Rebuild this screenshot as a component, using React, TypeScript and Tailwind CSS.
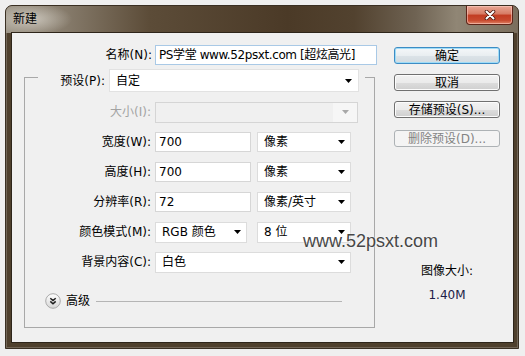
import React from "react";

const Arrow = ({ color = "#000" }: { color?: string }) => (
  <svg width="7" height="4" viewBox="0 0 7 4" className="shrink-0">
    <path d="M0 0H7L3.5 4Z" fill={color} />
  </svg>
);

function Select({ className, text }: { className: string; text: string }) {
  return (
    <div
      className={`flex items-center justify-between bg-white border border-[#dcdcdc] pl-[6px] pr-[5px] ${className}`}
    >
      <span>{text}</span>
      <Arrow />
    </div>
  );
}

function TextBox({ className, text }: { className: string; text: string }) {
  return (
    <div className={`flex items-center bg-white border border-[#d6d6d6] pl-[3px] ${className}`}>
      <span>{text}</span>
    </div>
  );
}

function Row({ label, children, disabled }: { label: string; children: React.ReactNode; disabled?: boolean }) {
  return (
    <div className="flex items-center h-[30px]">
      <div className={`w-[126px] text-right ${disabled ? "text-[#a3a3a3]" : "text-black"}`}>{label}</div>
      <div className="ml-[4px] flex items-center gap-[6px]">{children}</div>
    </div>
  );
}

function Btn({ children, kind }: { children: React.ReactNode; kind: "default" | "normal" | "disabled" }) {
  const cls =
    kind === "default"
      ? "border-[#3d8cc4] bg-[linear-gradient(to_bottom,#f4f7f9_0%,#e9eef1_50%,#dce3e8_51%,#d2dbe0_100%)] shadow-[inset_0_0_0_1px_#9fdcf7]"
      : kind === "normal"
      ? "border-[#707070] bg-[linear-gradient(to_bottom,#f2f2f2_0%,#ebebeb_50%,#dddddd_51%,#cfcfcf_100%)] shadow-[inset_0_0_0_1px_#fcfcfc]"
      : "border-[#adb2b5] bg-[#f4f4f4] text-[#838383]";
  return (
    <div className={`w-[106px] h-[17px] rounded-[3px] border flex items-center justify-center ${cls}`}>
      {children}
    </div>
  );
}

export default function App() {
  return (
    <div className="relative w-[525px] h-[356px] overflow-hidden bg-[#efefef] pt-[5px] pl-[5px] font-['DejaVu_Sans','Noto_Sans_CJK_SC',sans-serif] text-[12px] leading-none text-black">
      <div className="w-[514px] h-[344px] flex flex-col rounded-t-[7px] border border-[#3a2f22] bg-[#4f402d] overflow-hidden shadow-[inset_0_0_0_1px_rgba(255,255,255,0.2)]">
        {/* Title bar */}
        <div className="h-[27px] shrink-0 flex items-start justify-between bg-[radial-gradient(ellipse_42px_16px_at_24px_13px,rgba(205,200,190,0.95),rgba(205,200,190,0)),linear-gradient(to_right,#9d9587_0%,#857a6a_12%,#5c4c38_28%,#4b3a27_55%,#52422f_68%,#6f6353_80%,#908675_88%,#7a6e5d_100%)]">
          <span className="mt-[7px] ml-[7px] text-[12px] text-black">新建</span>
          <div className="mr-[5px] w-[47px] h-[19px] rounded-b-[4px] border border-t-0 border-[#5e2418] bg-[linear-gradient(to_bottom,#e8a896_0%,#d67a63_45%,#c23c22_50%,#c84a2f_80%,#de8466_100%)] shadow-[inset_0_0_0_1px_rgba(255,210,200,0.55)] flex items-center justify-center">
            <svg width="12" height="10" viewBox="0 0 12 10">
              <path d="M2.5 1.5L9.5 8.5M9.5 1.5L2.5 8.5" stroke="#4a1810" strokeWidth="3.6" strokeLinecap="round" />
              <path d="M2.5 1.5L9.5 8.5M9.5 1.5L2.5 8.5" stroke="#ffffff" strokeWidth="2" strokeLinecap="round" />
            </svg>
          </div>
        </div>

        {/* Body */}
        <div className="flex-1 pl-[6px] pr-[5px] pb-[6px]">
          <div className="w-[501px] h-[309px] bg-[#f0f0f0] flex shadow-[0_0_0_1px_#2e251a]">
            {/* Left column */}
            <div className="w-[370px]">
              <div className="flex items-center h-[20px] mt-[12px]">
                <div className="w-[140px] text-right">名称(N):</div>
                <div className="ml-[3px] w-[222px] h-[20px] flex items-center bg-white border border-[#a9c9e6] pl-[3px] tracking-[-0.4px]">
                  PS学堂 www.52psxt.com [超炫高光]
                </div>
              </div>

              <div className="ml-[12px] mt-[12px] w-[351px] border border-[#a8a8a8] pb-[11px]">
                <div className="-mt-[9px] ml-[13px] w-[327px] h-[23px] bg-[#f0f0f0] flex items-center">
                  <div className="w-[67px] text-right">预设(P):</div>
                  <Select className="ml-[4px] w-[250px] h-[23px] !pr-[6px] border-[#e2e2e2]" text="自定" />
                </div>

                <div className="mt-[5px]">
                  <Row label="大小(I):" disabled>
                    <div className="w-[203px] h-[21px] flex border border-[#d5d5d5] bg-[#f0f0f0]">
                      <div className="flex-1" />
                      <div className="w-[24px] h-full bg-[#f6f6f6] flex items-center justify-center">
                        <Arrow color="#a8a8a8" />
                      </div>
                    </div>
                  </Row>
                  <Row label="宽度(W):">
                    <TextBox className="w-[96px] h-[20px]" text="700" />
                    <Select className="w-[94px] h-[20px]" text="像素" />
                  </Row>
                  <Row label="高度(H):">
                    <TextBox className="w-[96px] h-[20px]" text="700" />
                    <Select className="w-[94px] h-[20px]" text="像素" />
                  </Row>
                  <Row label="分辨率(R):">
                    <TextBox className="w-[96px] h-[20px]" text="72" />
                    <Select className="w-[94px] h-[20px]" text="像素/英寸" />
                  </Row>
                  <Row label="颜色模式(M):">
                    <Select className="w-[92px] h-[21px]" text="RGB 颜色" />
                    <Select className="ml-[4px] w-[94px] h-[21px]" text="8 位" />
                  </Row>
                  <Row label="背景内容(C):">
                    <Select className="w-[196px] h-[21px]" text="白色" />
                  </Row>
                </div>

                <div className="mt-[9px] h-[30px] flex items-center pl-[20px] pr-[32px]">
                  <svg width="16" height="16" viewBox="0 0 16 16" className="shrink-0">
                    <defs>
                      <linearGradient id="adv" x1="0" y1="0" x2="0" y2="1">
                        <stop offset="0" stopColor="#ffffff" />
                        <stop offset="1" stopColor="#d6d6d6" />
                      </linearGradient>
                    </defs>
                    <circle cx="8" cy="8" r="7.3" fill="url(#adv)" stroke="#aaaaaa" />
                    <path d="M5.3 5.2L8 7.6L10.7 5.2M5.3 8.4L8 10.8L10.7 8.4" fill="none" stroke="#1e1e1e" strokeWidth="1.5" />
                  </svg>
                  <span className="ml-[5px]">高级</span>
                  <div className="ml-[6px] flex-1 h-px bg-[#b5b5b5]" />
                </div>
              </div>
            </div>

            {/* Right column */}
            <div className="ml-[12px] w-[106px] pt-[14px] flex flex-col">
              <Btn kind="default">确定</Btn>
              <div className="mt-[10px]">
                <Btn kind="normal">取消</Btn>
              </div>
              <div className="mt-[10px]">
                <Btn kind="normal">存储预设(S)...</Btn>
              </div>
              <div className="mt-[12px]">
                <Btn kind="disabled">删除预设(D)...</Btn>
              </div>
              <div className="mt-[118px] text-center">图像大小:</div>
              <div className="mt-[12px] text-center text-[#1c1c48]">1.40M</div>
            </div>
          </div>
        </div>
      </div>

      <div className="absolute left-[303px] top-[232px] font-['Liberation_Sans',sans-serif] text-[18px] leading-none text-[#474747] [text-shadow:0_0_2px_#ffffff]">
        www.52psxt.com
      </div>
    </div>
  );
}
